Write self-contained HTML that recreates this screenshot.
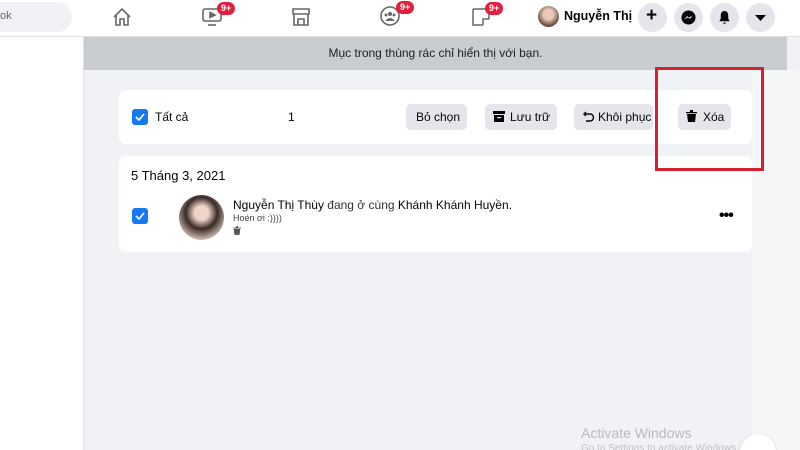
<!DOCTYPE html>
<html><head><meta charset="utf-8"><style>
*{margin:0;padding:0;box-sizing:border-box}
html,body{width:800px;height:450px;overflow:hidden}
body{background:#f0f2f5;font-family:"Liberation Sans","Noto Sans CJK SC",sans-serif;color:#050505;position:relative}
.a{position:absolute}
.nav{left:0;top:0;width:800px;height:37px;background:#fff;border-bottom:1px solid #dddfe2}
.search{left:-20px;top:2px;width:92px;height:30px;background:#f0f2f5;border-radius:16px;font-size:11px;color:#65676b;padding:8px 0 0 20px}
.side{left:0;top:37px;width:84px;height:413px;background:#fff;border-right:1px solid #dddfe2}
.banner{left:84px;top:37px;width:703px;height:33px;background:#c9ccd1;font-size:12px;text-align:center;line-height:33px;color:#1c1e21}
.rs{left:752px;top:70px;width:48px;height:380px;background:#f5f6f8}
.card{background:#fff;border-radius:7px}
.cb{width:16px;height:16px;background:#1877f2;border-radius:3px}
.btn{height:26px;background:#e4e6eb;border-radius:5px;font-size:12px;line-height:26px;color:#050505}
.btn span{position:absolute;top:0}
.circ{width:29px;height:29px;border-radius:50%;background:#e4e6eb;top:3px}
.badge{background:#e41e3f;color:#fff;font-size:9px;font-weight:bold;border-radius:8px;padding:1px 4px;line-height:11px}
</style></head><body>
<div class="a nav"></div>
<div class="a search">ok</div>
<svg class="a" style="left:112px;top:7px" width="20" height="20" viewBox="0 0 20 20" fill="none" stroke="#65676b" stroke-width="1.6"><path d="M2 10 L10 2 L18 10 M4 8 V18 H8 V12 H12 V18 H16 V8"/></svg>
<svg class="a" style="left:202px;top:8px" width="20" height="18" viewBox="0 0 20 18" fill="none" stroke="#65676b" stroke-width="1.6"><rect x="1" y="1" width="18" height="12" rx="2"/><path d="M6 17H14"/><path d="M8 4.5L13 7L8 9.5Z" fill="#65676b"/></svg>
<div class="a badge" style="left:217px;top:2px">9+</div>
<svg class="a" style="left:291px;top:8px" width="20" height="18" viewBox="0 0 20 18" fill="none" stroke="#65676b" stroke-width="1.6"><path d="M2 1H18V6H2Z M3 6V17H17V6 M7 17V11H13V17"/></svg>
<svg class="a" style="left:380px;top:6px" width="20" height="20" viewBox="0 0 20 20"><circle cx="10" cy="10" r="9" fill="none" stroke="#65676b" stroke-width="1.6"/><circle cx="10" cy="8" r="2" fill="#65676b"/><circle cx="6" cy="9" r="1.5" fill="#65676b"/><circle cx="14" cy="9" r="1.5" fill="#65676b"/><path d="M5 15Q10 9 15 15Z" fill="#65676b"/></svg>
<div class="a badge" style="left:396px;top:1px">9+</div>
<svg class="a" style="left:472px;top:8px" width="18" height="18" viewBox="0 0 18 18" fill="none" stroke="#65676b" stroke-width="1.5"><path d="M1 1H17V11 M1 1V17H11 M11 17V11H17"/></svg>
<div class="a badge" style="left:485px;top:2px">9+</div>
<div class="a" style="left:538px;top:6px;width:21px;height:21px;border-radius:50%;background:radial-gradient(circle at 50% 40%,#e8c8b8 30%,#6b4a3a 70%)"></div>
<div class="a" style="left:564px;top:9px;font-size:12.5px;font-weight:bold">Nguyễn Thị</div>
<div class="a circ" style="left:638px"></div><div class="a" style="left:646px;top:5px;font-size:19px;font-weight:bold">+</div>
<div class="a circ" style="left:674px"></div><svg class="a" style="left:681px;top:10px" width="15" height="15" viewBox="0 0 16 16"><circle cx="8" cy="8" r="7.5" fill="#050505"/><path d="M3.5 10L6.5 6.5L8.5 8L12.5 6L9.5 9.5L7.5 8Z" fill="#e4e6eb"/></svg>
<div class="a circ" style="left:710px"></div><svg class="a" style="left:717px;top:10px" width="15" height="15" viewBox="0 0 16 16"><path d="M8 1C5 1 4 3.5 4 6V9L2.5 12H13.5L12 9V6C12 3.5 11 1 8 1Z M6 13.5Q8 16 10 13.5Z" fill="#050505"/></svg>
<div class="a circ" style="left:746px"></div><svg class="a" style="left:755px;top:15px" width="11" height="7" viewBox="0 0 11 7"><path d="M0 0H11L5.5 6Z" fill="#050505"/></svg>
<div class="a side"></div>
<div class="a banner">Mục trong thùng rác chỉ hiển thị với bạn.</div>
<div class="a rs"></div>
<div class="a card" style="left:119px;top:90px;width:633px;height:54px"></div>
<div class="a cb" style="left:132px;top:109px"></div><svg class="a" style="left:135px;top:113px" width="10" height="8" viewBox="0 0 10 8"><path d="M1 4L4 7L9 1" stroke="#fff" stroke-width="1.6" fill="none"/></svg>
<div class="a" style="left:155px;top:110px;font-size:12px">Tất cả</div>
<div class="a" style="left:288px;top:110px;font-size:12px">1</div>
<div class="a btn" style="left:406px;top:104px;width:61px"><span style="left:10px">Bỏ chọn</span></div>
<div class="a btn" style="left:485px;top:104px;width:72px"><span style="left:25px">Lưu trữ</span></div>
<svg class="a" style="left:493px;top:111px" width="12" height="11" viewBox="0 0 12 11"><rect x="0" y="0" width="12" height="3" fill="#050505"/><rect x="1" y="4" width="10" height="7" fill="#050505"/><rect x="4" y="6" width="4" height="1.2" fill="#e4e6eb"/></svg>
<div class="a btn" style="left:574px;top:104px;width:79px"><span style="left:24px">Khôi phục</span></div>
<svg class="a" style="left:583px;top:111px" width="12" height="11" viewBox="0 0 12 11" fill="none" stroke="#050505" stroke-width="1.4"><path d="M3 1L1 3L3 5 M1 3H7A3.5 3.5 0 0 1 7 10H3"/></svg>
<div class="a btn" style="left:678px;top:104px;width:53px"><span style="left:25px">Xóa</span></div>
<svg class="a" style="left:686px;top:110px" width="11" height="12" viewBox="0 0 11 12"><path d="M0 2H11V3.2H0Z M4 0H7V2H4Z M1 4H10L9 12H2Z" fill="#050505"/></svg>
<div class="a card" style="left:119px;top:156px;width:633px;height:96px"></div>
<div class="a" style="left:131px;top:168px;font-size:13px">5 Tháng 3, 2021</div>
<div class="a cb" style="left:132px;top:208px"></div><svg class="a" style="left:135px;top:212px" width="10" height="8" viewBox="0 0 10 8"><path d="M1 4L4 7L9 1" stroke="#fff" stroke-width="1.6" fill="none"/></svg>
<div class="a" style="left:179px;top:195px;width:45px;height:45px;border-radius:50%;background:radial-gradient(circle at 50% 40%,#f0d4c8 20%,#3a2a25 45%,#c9b8b0 75%)"></div>
<div class="a" style="left:233px;top:198px;font-size:12px">Nguyễn Thị Thùy <span style="color:#333">đang ở cùng</span> Khánh Khánh Huyền.</div>
<div class="a" style="left:233px;top:213px;font-size:9px;color:#444">Hoén ơi :))))</div>
<svg class="a" style="left:233px;top:226px" width="8" height="9" viewBox="0 0 11 12"><path d="M0 2H11V3.2H0Z M4 0H7V2H4Z M1 4H10L9 12H2Z" fill="#555"/></svg>
<div class="a" style="left:719px;top:207px;font-size:16px;font-weight:bold;letter-spacing:-1px">•••</div>
<div class="a" style="left:655px;top:67px;width:109px;height:104px;border:3px solid #d4202f"></div>
<div class="a" style="left:581px;top:425px;font-size:14px;color:#b8babd">Activate Windows</div>
<div class="a" style="left:581px;top:443px;font-size:10px;color:#c0c2c5">Go to Settings to activate Windows.</div>
<div class="a" style="left:740px;top:434px;width:36px;height:36px;border-radius:50%;background:#fff;box-shadow:0 1px 3px rgba(0,0,0,.2)"></div>
</body></html>
